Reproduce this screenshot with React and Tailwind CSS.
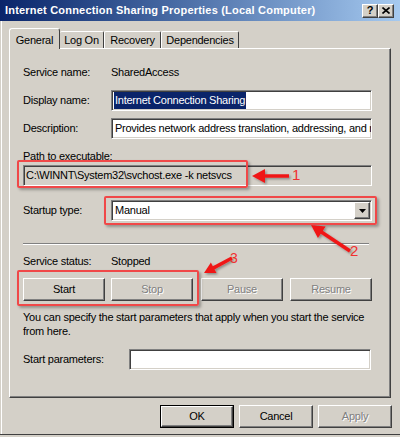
import React from "react";

const sunken =
  "border border-t-[#808080] border-l-[#808080] border-b-white border-r-white shadow-[inset_1px_1px_0_#404040,inset_-1px_-1px_0_#d4d0c8]";
const raised =
  "border border-t-white border-l-white border-b-[#404040] border-r-[#404040] shadow-[inset_-1px_-1px_0_#808080] bg-[#d4d0c8]";
const disabledText = "text-[#808080] [text-shadow:1px_1px_0_#fff]";

function Btn({ children, className = "", disabled, isDefault }) {
  const inner = (
    <div
      className={`flex h-full w-full items-center justify-center ${raised} ${
        disabled ? disabledText : ""
      }`}
    >
      {children}
    </div>
  );
  if (isDefault) {
    return <div className={`border border-black ${className}`}>{inner}</div>;
  }
  return <div className={className}>{inner}</div>;
}

function arrow(tip, tail, head = 13, headW = 7, shaft = 1.8) {
  const dx = tail[0] - tip[0];
  const dy = tail[1] - tip[1];
  const len = Math.hypot(dx, dy);
  const ux = dx / len;
  const uy = dy / len;
  const nx = -uy;
  const ny = ux;
  const b = [tip[0] + ux * head, tip[1] + uy * head];
  const p = (x, y) => `${x.toFixed(1)},${y.toFixed(1)}`;
  return [
    p(tip[0], tip[1]),
    p(b[0] + nx * headW, b[1] + ny * headW),
    p(b[0] + nx * shaft, b[1] + ny * shaft),
    p(tail[0] + nx * shaft, tail[1] + ny * shaft),
    p(tail[0] - nx * shaft, tail[1] - ny * shaft),
    p(b[0] - nx * shaft, b[1] - ny * shaft),
    p(b[0] - nx * headW, b[1] - ny * headW),
  ].join(" ");
}

const tabs = ["Log On", "Recovery", "Dependencies"];
const tabWidths = ["w-[44px]", "w-[57px]", "w-[78px]"];

export default function App() {
  return (
    <div className="relative h-[437px] w-[400px] overflow-hidden bg-[#d4d0c8] font-['Liberation_Sans',Arial,sans-serif] text-[11px] tracking-[-0.25px] text-black">
      {/* title bar */}
      <div className="flex h-[21px] items-center bg-linear-to-r from-[#0a246a] to-[#a6caf0] pl-[5px] pr-[6px]">
        <div className="flex-1 text-[11px] font-bold tracking-[0.2px] text-white">
          Internet Connection Sharing Properties (Local Computer)
        </div>
        <Btn className="h-[14px] w-[16px]">
          <span className="text-[11px] font-bold leading-none">?</span>
        </Btn>
        <Btn className="h-[14px] w-[16px]">
          <svg width="8" height="7" viewBox="0 0 8 7">
            <path d="M0.5 0.5 L7.5 6.5 M7.5 0.5 L0.5 6.5" stroke="#000" strokeWidth="1.6" />
          </svg>
        </Btn>
      </div>

      <div className="ml-px h-[413px] border-l border-white">
        {/* tabs */}
        <div className="flex h-[27px] items-end pl-[7px]">
          <div className="relative z-10 -mb-px flex h-[21px] w-[51px] items-start justify-center rounded-t-[3px] border-l border-t border-r border-l-white border-t-white border-r-[#404040] bg-[#d4d0c8] pt-[3px]">
            General
          </div>
          {tabs.map((t, i) => (
            <div
              key={t}
              className={`flex h-[17px] ${tabWidths[i]} items-center justify-center rounded-t-[2px] border-t border-r border-t-white border-r-[#404040] ${
                i === 0 ? "" : "border-l border-l-white"
              }`}
            >
              {t}
            </div>
          ))}
        </div>

        {/* panel */}
        <div className="ml-[7px] flex h-[350px] w-[382px] flex-col border border-t-white border-l-white border-b-[#404040] border-r-[#404040] pl-[13px] shadow-[inset_-1px_-1px_0_#808080]">
          <div className="mt-[13px] flex h-[20px] items-center">
            <div className="w-[88px]">Service name:</div>
            <div>SharedAccess</div>
          </div>

          <div className="mt-[8px] flex h-[21px] items-center">
            <div className="w-[88px]">Display name:</div>
            <div className={`flex h-[21px] w-[261px] items-center bg-white pl-[2px] ${sunken}`}>
              <span className="bg-[#0a246a] px-px text-white">Internet Connection Sharing</span>
            </div>
          </div>

          <div className="mt-[7px] flex h-[21px] items-center">
            <div className="w-[88px]">Description:</div>
            <div className={`flex h-[21px] w-[261px] items-center overflow-hidden whitespace-nowrap bg-white pl-[3px] ${sunken}`}>
              Provides network address translation, addressing, and r
            </div>
          </div>

          <div className="mt-[11px] h-[13px] leading-[13px]">Path to executable:</div>
          <div className={`mt-[2px] flex h-[21px] w-[349px] items-center pl-[2px] ${sunken}`}>
            C:\WINNT\System32\svchost.exe -k netsvcs
          </div>

          <div className="mt-[14px] flex h-[21px] items-center">
            <div className="w-[88px]">Startup type:</div>
            <div className={`flex h-[21px] w-[261px] items-center bg-white pl-[3px] pr-px ${sunken}`}>
              <span className="flex-1">Manual</span>
              <Btn className="h-[17px] w-[16px]">
                <svg width="7" height="4" viewBox="0 0 7 4">
                  <path d="M0 0 H7 L3.5 4 Z" fill="#000" />
                </svg>
              </Btn>
            </div>
          </div>

          <div className="mt-[22px] h-[2px] w-[346px] border-t border-b border-t-[#808080] border-b-white" />

          <div className="mt-[9px] flex h-[14px] items-center">
            <div className="w-[88px]">Service status:</div>
            <div>Stopped</div>
          </div>

          <div className="mt-[10px] flex h-[23px]">
            <Btn className="h-[23px] w-[82px]">Start</Btn>
            <Btn className="ml-[6px] h-[23px] w-[82px]" disabled>
              Stop
            </Btn>
            <Btn className="ml-[8px] h-[23px] w-[82px]" disabled>
              Pause
            </Btn>
            <Btn className="ml-[7px] h-[23px] w-[82px]" disabled>
              Resume
            </Btn>
          </div>

          <div className="mt-[9px] w-[352px] leading-[14px]">
            You can specify the start parameters that apply when you start the service from here.
          </div>

          <div className="mt-[11px] flex h-[21px] items-center">
            <div className="w-[106px]">Start parameters:</div>
            <div className={`h-[21px] w-[242px] bg-white ${sunken}`} />
          </div>
        </div>

        {/* bottom buttons */}
        <div className="mt-[7px] flex justify-end gap-[5px] pr-[8px]">
          <Btn className="h-[23px] w-[74px]" isDefault>
            OK
          </Btn>
          <Btn className="h-[23px] w-[74px]">Cancel</Btn>
          <Btn className="h-[23px] w-[74px]" disabled>
            Apply
          </Btn>
        </div>
      </div>
      <div className="h-px w-full bg-[#404040]" />

      {/* annotations */}
      <div className="absolute left-[17px] top-[160px] h-[28px] w-[231px] rounded-[2px] border-2 border-[#f04848] shadow-[2px_2px_3px_rgba(0,0,0,0.3)]" />
      <div className="absolute left-[104px] top-[196px] h-[29px] w-[273px] rounded-[2px] border-2 border-[#f04848] shadow-[2px_2px_3px_rgba(0,0,0,0.3)]" />
      <div className="absolute left-[17px] top-[270px] h-[36px] w-[182px] rounded-[2px] border-2 border-[#f04848] shadow-[2px_2px_3px_rgba(0,0,0,0.3)]" />

      <svg className="pointer-events-none absolute left-0 top-0" width="400" height="437">
        <defs>
          <filter id="sh" x="-20%" y="-20%" width="140%" height="140%">
            <feDropShadow dx="1.5" dy="1.5" stdDeviation="1.2" floodColor="#000" floodOpacity="0.35" />
          </filter>
        </defs>
        <g fill="#f01818" filter="url(#sh)">
          <polygon points={arrow([252, 176], [289, 176])} />
          <polygon points={arrow([311, 225], [350, 251])} />
          <polygon points={arrow([204, 273], [232, 258], 11, 6)} />
        </g>
      </svg>

      <span className="absolute left-[292px] top-[167px] font-['Liberation_Sans',sans-serif] text-[15px] leading-none text-[#f03030]">
        1
      </span>
      <span className="absolute left-[350px] top-[243px] font-['Liberation_Sans',sans-serif] text-[15px] leading-none text-[#f03030]">
        2
      </span>
      <span className="absolute left-[230px] top-[251px] font-['Liberation_Sans',sans-serif] text-[14px] leading-none text-[#f03030]">
        3
      </span>
    </div>
  );
}
